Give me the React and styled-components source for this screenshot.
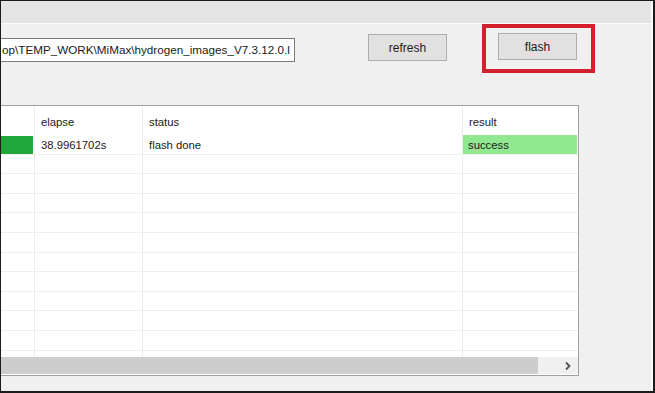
import React from "react";
import styled, { createGlobalStyle } from "styled-components";

const GlobalStyle = createGlobalStyle`
  html, body {
    margin: 0;
    padding: 0;
    background: #1b1b1b;
  }
  * {
    box-sizing: border-box;
  }
`;

const columns = ["", "elapse", "status", "result"];
const rows = [
  { state: "ok", elapse: "38.9961702s", status: "flash done", result: "success" },
];
const emptyRows = 11;

const App = () => {
  return (
    <>
      <GlobalStyle />
      <Window>
        <Frame>
          <TitleStrip />
          <Body>
            <Toolbar>
              <PathField>op\TEMP_WORK\MiMax\hydrogen_images_V7.3.12.0.l</PathField>
              <Button>refresh</Button>
              <Highlight>
                <Button>flash</Button>
              </Highlight>
            </Toolbar>

            <Table>
              <Grid>
                <HeaderRow>
                  {columns.map((c, i) => (
                    <HeaderCell key={i}>{c}</HeaderCell>
                  ))}
                </HeaderRow>
                {rows.map((r, i) => (
                  <Row key={i}>
                    <Cell>
                      <StateFill />
                    </Cell>
                    <Cell>{r.elapse}</Cell>
                    <Cell>{r.status}</Cell>
                    <Cell $bg="#90e990">{r.result}</Cell>
                  </Row>
                ))}
                {Array.from({ length: emptyRows }).map((_, i) => (
                  <Row key={"e" + i}>
                    <Cell />
                    <Cell />
                    <Cell />
                    <Cell />
                  </Row>
                ))}
              </Grid>
              <HScroll>
                <Thumb />
                <ArrowBox>
                  <svg width="8" height="10" viewBox="0 0 8 10">
                    <path d="M2 1.5 L5.5 5 L2 8.5" fill="none" stroke="#555" strokeWidth="1.8" />
                  </svg>
                </ArrowBox>
              </HScroll>
            </Table>
          </Body>
        </Frame>
      </Window>
    </>
  );
};

const Window = styled.div`
  width: 655px;
  height: 393px;
  overflow: hidden;
  border-left: 1px solid #1b1b1b;
  border-top: 1px solid #1b1b1b;
  border-right: 2px solid #1b1b1b;
  border-bottom: 2px solid #1b1b1b;
  font-family: "Liberation Sans", Arial, sans-serif;
  font-size: 11.3px;
  color: #1a1a1a;
`;

const Frame = styled.div`
  height: 100%;
  display: flex;
  flex-direction: column;
  background: #f0f0f0;
  border-right: 2px solid #fbfbfb;
`;

const TitleStrip = styled.div`
  height: 23px;
  flex: none;
  background: #e4e4e4;
  border-bottom: 1px solid #fdfdfd;
`;

const Body = styled.div`
  flex: 1;
  display: flex;
  flex-direction: column;
`;

const Toolbar = styled.div`
  display: flex;
  align-items: flex-start;

  & > * {
    flex: none;
  }
`;

const PathField = styled.div`
  width: 294px;
  height: 24px;
  margin-top: 14px;
  border: 1px solid #7a7a7a;
  border-left: none;
  background: #fff;
  padding-left: 1px;
  line-height: 22px;
  font-size: 11.7px;
  white-space: nowrap;
  overflow: hidden;
`;

const Button = styled.div`
  width: 79px;
  height: 27px;
  margin-top: 10px;
  margin-left: 73px;
  display: flex;
  align-items: center;
  justify-content: center;
  background: #e1e1e1;
  border: 1px solid #adadad;
  font-size: 12px;
`;

const Highlight = styled.div`
  width: 113px;
  height: 49px;
  margin-left: 35px;
  border: 4px solid #d41f2e;
  padding: 5px 0 0 12px;

  ${Button} {
    margin: 0;
  }
`;

const Table = styled.div`
  margin-top: 32px;
  width: 578px;
  height: 271px;
  display: flex;
  flex-direction: column;
  background: #fff;
  border: 1px solid #a0a0a0;
  border-left: none;
`;

const Grid = styled.div`
  flex: 1;
  overflow: hidden;
`;

const HeaderRow = styled.div`
  display: grid;
  grid-template-columns: 34px 108px 320px 1fr;
  height: 29px;
`;

const HeaderCell = styled.div`
  border-right: 1px solid #ececec;
  padding: 10px 0 0 6px;

  &:last-child {
    border-right: none;
  }
`;

const Row = styled.div`
  display: grid;
  grid-template-columns: 34px 108px 320px 1fr;
  height: 19.6px;
  border-bottom: 1px solid #efefef;
`;

const Cell = styled.div`
  border-right: 1px solid #ececec;
  padding: 3px 0 0 6px;
  line-height: 15px;
  background: ${(p) => p.$bg || "transparent"};
  white-space: nowrap;
  overflow: hidden;

  &:first-child {
    padding: 1px 1px 0 0;
  }

  &:last-child {
    border-right: none;
    margin-right: 1px;
    padding-left: 5px;
  }
`;

const StateFill = styled.div`
  height: 100%;
  background: #20a83a;
`;

const HScroll = styled.div`
  height: 17px;
  flex: none;
  display: flex;
  background: #f0f0f0;
  margin-bottom: 1px;
`;

const Thumb = styled.div`
  width: 537px;
  background: #cdcdcd;
`;

const ArrowBox = styled.div`
  flex: 1;
  display: flex;
  align-items: center;
  justify-content: flex-end;
  padding-right: 6px;
`;

export default App;
